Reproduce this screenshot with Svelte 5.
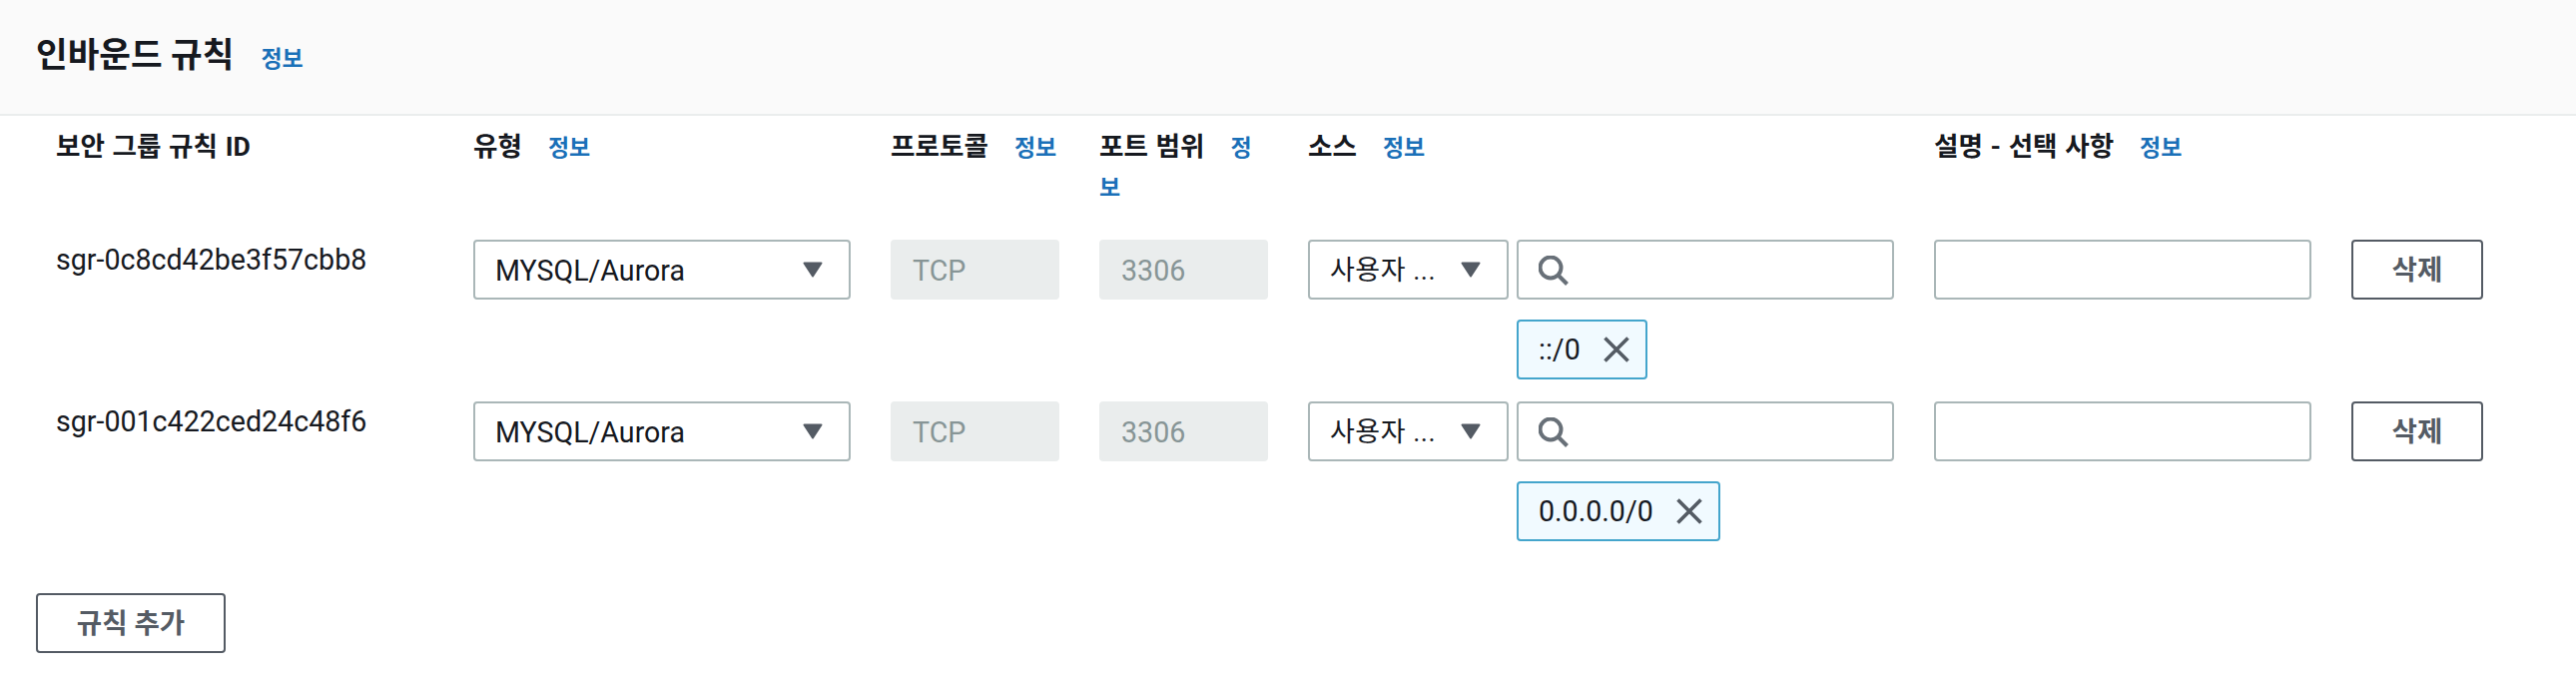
<script>
  const rows = [
    { id: 'sgr-0c8cd42be3f57cbb8', chip: '::/0' },
    { id: 'sgr-001c422ced24c48f6', chip: '0.0.0.0/0' }
  ];
</script>

{#snippet caret()}
  <svg class="caret" width="20" height="16" viewBox="0 0 20 16"><path d="M1.5 1.5h17L10 14.5z" fill="#545b64" stroke="#545b64" stroke-width="2" stroke-linejoin="round"/></svg>
{/snippet}

<section class="panel">
  <header class="head">
    <h2>인바운드 규칙</h2>
    <a class="info" href="#top">정보</a>
  </header>

  <div class="body">
    <div class="grid labels">
      <div class="label"><b>보안 그룹 규칙 ID</b></div>
      <div class="label"><b>유형</b><a class="info" href="#top">정보</a></div>
      <div class="label"><b>프로토콜</b><a class="info" href="#top">정보</a></div>
      <div class="label wrap"><b>포트 범위</b><a class="info" href="#top">정보</a></div>
      <div class="label"><b>소스</b><a class="info" href="#top">정보</a></div>
      <div class="label"><b>설명 - 선택 사항</b><a class="info" href="#top">정보</a></div>
      <div></div>
    </div>

    {#each rows as row}
      <div class="grid row">
        <div class="ruleid">{row.id}</div>
        <div class="box select"><span>MYSQL/Aurora</span>{@render caret()}</div>
        <div class="box disabled">TCP</div>
        <div class="box disabled">3306</div>
        <div class="source">
          <div class="box select small"><span>사용자 ...</span>{@render caret()}</div>
          <div class="searchcol">
            <div class="box search">
              <svg width="30" height="30" viewBox="0 0 30 30" fill="none" stroke="#687078" stroke-width="4"><circle cx="12" cy="12" r="10.5"/><path d="M19.5 19.5L28.5 28.5"/></svg>
            </div>
            <div class="chip">
              <span>{row.chip}</span>
              <svg width="26" height="26" viewBox="0 0 26 26" fill="none" stroke="#545b64" stroke-width="3.6"><path d="M1.5 1.5l23 23M24.5 1.5l-23 23"/></svg>
            </div>
          </div>
        </div>
        <div class="box"></div>
        <button class="btn">삭제</button>
      </div>
    {/each}

    <button class="btn add">규칙 추가</button>
  </div>
</section>

<style>
  :global(body) {
    margin: 0;
    background: #fff;
  }
  .panel {
    font-family: Roboto, "Noto Sans CJK KR", sans-serif;
    font-size: 28.6px;
    line-height: 40px;
    color: #16191f;
  }
  .head {
    box-sizing: border-box;
    background: #fafafa;
    border-bottom: 2px solid #eaeded;
    height: 116px;
    padding: 33px 0 0 36px;
    display: flex;
    align-items: baseline;
    gap: 27px;
  }
  h2 {
    margin: 0;
    font-size: 34.4px;
    line-height: 44px;
    font-weight: 700;
  }
  .info {
    color: #1a70b8;
    font-size: 23px;
    line-height: 1;
    font-weight: 700;
    text-decoration: none;
  }
  .body {
    padding: 0 0 0 36px;
  }
  .grid {
    display: grid;
    grid-template-columns: 378px 378px 169px 169px 587px 378px 132px;
    column-gap: 40px;
    padding-left: 20px;
  }
  .labels {
    height: 124px;
    padding-top: 10px;
    box-sizing: border-box;
  }
  .label b {
    font-size: 26.6px;
    line-height: 1;
    font-weight: 700;
    word-spacing: 1px;
    margin-right: 26px;
  }
  .row {
    height: 162px;
    align-items: start;
  }
  .box {
    box-sizing: border-box;
    height: 60px;
    border: 2px solid #aab7b8;
    border-radius: 4px;
    background: #fff;
    padding: 1px 20px 0;
    display: flex;
    align-items: center;
    justify-content: space-between;
  }
  .select .caret {
    flex: none;
    margin-top: -1px;
    margin-right: 6px;
  }
  .disabled {
    background: #eaeded;
    border-color: #eaeded;
    color: #879596;
  }
  .source {
    display: grid;
    grid-template-columns: 201px 378px;
    column-gap: 8px;
  }
  .select.small span {
    font-size: 27px;
    letter-spacing: 0.5px;
  }
  .search {
    justify-content: flex-start;
  }
  .chip {
    box-sizing: border-box;
    height: 60px;
    margin-top: 20px;
    width: fit-content;
    border: 2px solid #44a5cc;
    border-radius: 4px;
    background: #f1faff;
    padding: 0 16px 0 20px;
    display: flex;
    align-items: center;
    gap: 23px;
  }
  .btn {
    box-sizing: border-box;
    height: 60px;
    border: 2px solid #545b64;
    border-radius: 4px;
    background: #fff;
    color: #545b64;
    font: 700 27.6px/36px Roboto, "Noto Sans CJK KR", sans-serif;
    padding: 2px 0 0;
  }
  .add {
    display: block;
    width: 190px;
    margin-top: 30px;
  }
</style>
